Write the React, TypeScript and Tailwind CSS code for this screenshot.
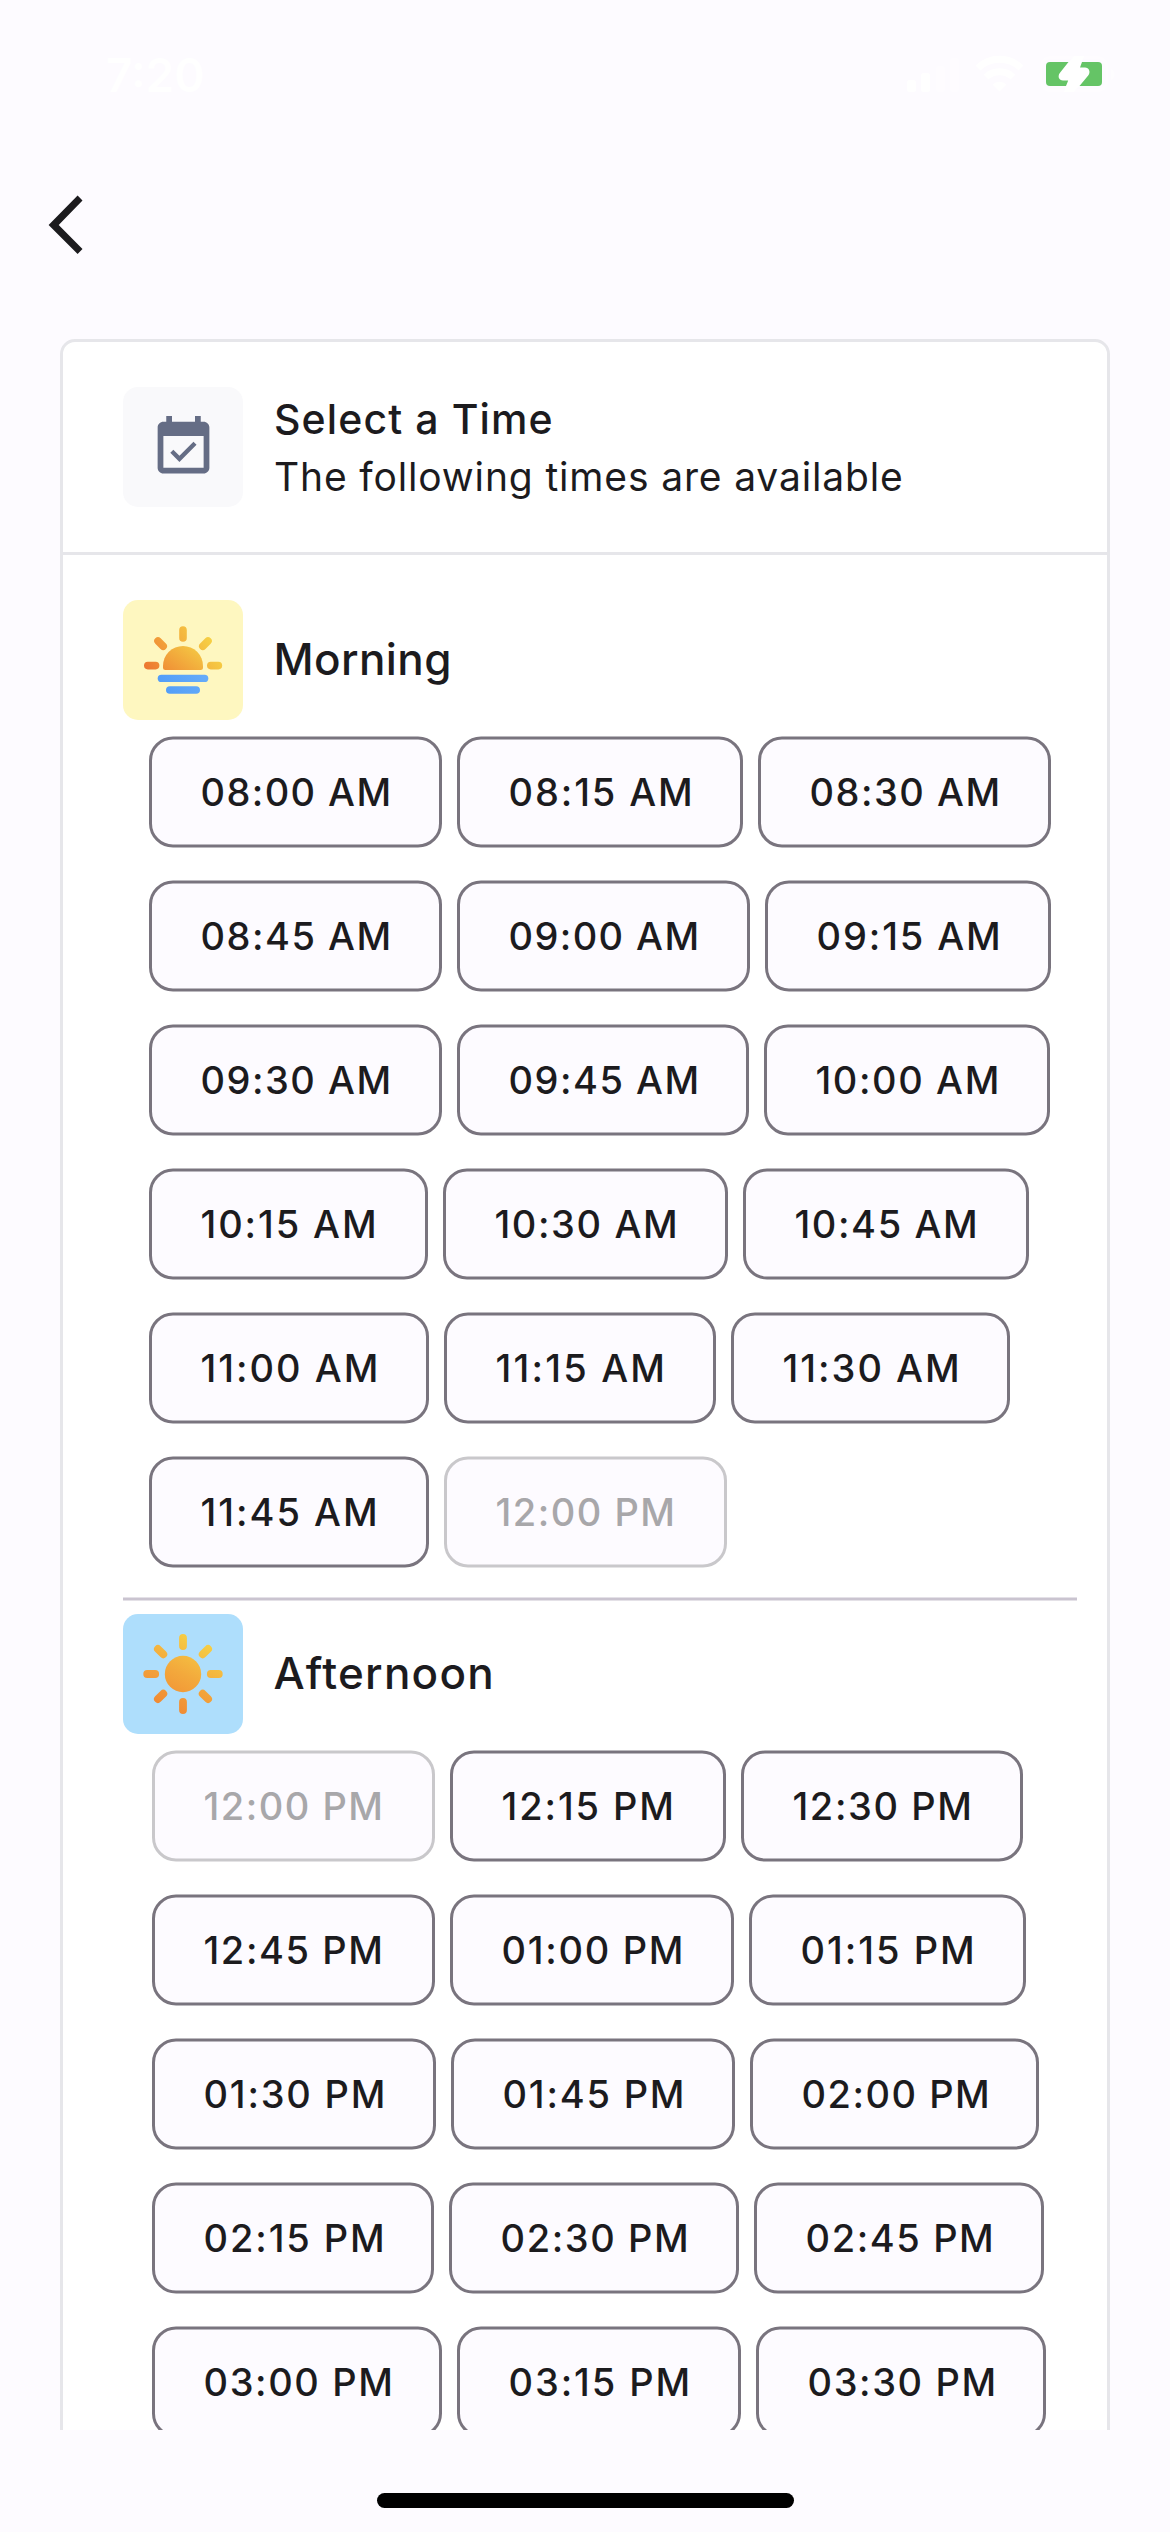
import type { ReactNode } from "react";

type Slot = { time: string; size: string; tracking: string; off?: boolean };

const MORNING: Slot[][] = [
  [
    { time: "08:00 AM", size: "w-[293px]", tracking: "tracking-[1.4px]" },
    { time: "08:15 AM", size: "w-[286px]", tracking: "tracking-[1.9px]" },
    { time: "08:30 AM", size: "w-[293px]", tracking: "tracking-[1.5px]" },
  ],
  [
    { time: "08:45 AM", size: "w-[293px]", tracking: "tracking-[1.5px]" },
    { time: "09:00 AM", size: "w-[293px]", tracking: "tracking-[1.4px]" },
    { time: "09:15 AM", size: "w-[286px]", tracking: "tracking-[1.9px]" },
  ],
  [
    { time: "09:30 AM", size: "w-[293px]", tracking: "tracking-[1.5px]" },
    { time: "09:45 AM", size: "w-[292px]", tracking: "tracking-[1.5px]" },
    { time: "10:00 AM", size: "w-[286px]", tracking: "tracking-[1.6px]" },
  ],
  [
    { time: "10:15 AM", size: "w-[279px]", tracking: "tracking-[1.9px]" },
    { time: "10:30 AM", size: "w-[285px]", tracking: "tracking-[1.6px]" },
    { time: "10:45 AM", size: "w-[286px]", tracking: "tracking-[1.6px]" },
  ],
  [
    { time: "11:00 AM", size: "w-[280px]", tracking: "tracking-[2px]" },
    { time: "11:15 AM", size: "w-[272px]", tracking: "tracking-[2.2px]" },
    { time: "11:30 AM", size: "w-[279px]", tracking: "tracking-[2px]" },
  ],
  [
    { time: "11:45 AM", size: "w-[280px]", tracking: "tracking-[2px]" },
    { time: "12:00 PM", size: "w-[283px]", tracking: "tracking-[1.5px]", off: true },
  ],
];

const AFTERNOON: Slot[][] = [
  [
    { time: "12:00 PM", size: "w-[283px]", tracking: "tracking-[1.5px]", off: true },
    { time: "12:15 PM", size: "w-[276px]", tracking: "tracking-[1.9px]" },
    { time: "12:30 PM", size: "w-[282px]", tracking: "tracking-[1.6px]" },
  ],
  [
    { time: "12:45 PM", size: "w-[283px]", tracking: "tracking-[1.6px]" },
    { time: "01:00 PM", size: "w-[284px]", tracking: "tracking-[1.7px]" },
    { time: "01:15 PM", size: "w-[277px]", tracking: "tracking-[2px]" },
  ],
  [
    { time: "01:30 PM", size: "w-[284px]", tracking: "tracking-[1.8px]" },
    { time: "01:45 PM", size: "w-[284px]", tracking: "tracking-[1.8px]" },
    { time: "02:00 PM", size: "w-[289px]", tracking: "tracking-[1.5px]" },
  ],
  [
    { time: "02:15 PM", size: "w-[282px]", tracking: "tracking-[1.9px]" },
    { time: "02:30 PM", size: "w-[290px]", tracking: "tracking-[1.6px]" },
    { time: "02:45 PM", size: "w-[290px]", tracking: "tracking-[1.6px]" },
  ],
  [
    { time: "03:00 PM", size: "w-[290px]", tracking: "tracking-[1.6px]" },
    { time: "03:15 PM", size: "w-[284px]", tracking: "tracking-[1.9px]" },
    { time: "03:30 PM", size: "w-[290px]", tracking: "tracking-[1.6px]" },
  ],
];

function SlotButton({ slot }: { slot: Slot }) {
  const tone = slot.off
    ? "border-[#c9c8cb] text-[#a8a7aa]"
    : "border-[#79747e] text-[#1c1b1e]";
  return (
    <button
      type="button"
      disabled={slot.off}
      className={`h-[111px] shrink-0 rounded-[24px] border-[3px] bg-[#fdfbff] pl-[48.5px] text-left text-[38px] leading-[105px] font-medium whitespace-nowrap ${slot.size} ${slot.tracking} ${tone}`}
    >
      {slot.time}
    </button>
  );
}

function SlotRows({ rows, inset }: { rows: Slot[][]; inset: string }) {
  return (
    <div className={`mt-4 flex translate-y-[0.5px] flex-col gap-[33px] ${inset}`}>
      {rows.map((row, i) => (
        <div key={i} className="flex gap-[15px]">
          {row.map((slot) => (
            <SlotButton key={slot.time} slot={slot} />
          ))}
        </div>
      ))}
    </div>
  );
}

function SunriseIcon() {
  return (
    <svg viewBox="0 0 120 120" className="size-[120px]" fill="none">
      <defs>
        <linearGradient id="rise" gradientUnits="userSpaceOnUse" x1="25" y1="76" x2="86" y2="36">
          <stop offset="0" stopColor="#ec7430" />
          <stop offset="0.45" stopColor="#f2a13a" />
          <stop offset="1" stopColor="#f6d044" />
        </linearGradient>
        <linearGradient id="riseDome" gradientUnits="userSpaceOnUse" x1="46" y1="74" x2="68" y2="44">
          <stop offset="0" stopColor="#f08f35" />
          <stop offset="1" stopColor="#f4c643" />
        </linearGradient>
        <linearGradient id="water" gradientUnits="userSpaceOnUse" x1="40" y1="94" x2="80" y2="74">
          <stop offset="0" stopColor="#519df8" />
          <stop offset="1" stopColor="#64abf9" />
        </linearGradient>
      </defs>
      <path d="M40 66a20 20 0 0 1 40 0v1.5a2.5 2.5 0 0 1-2.5 2.5h-35a2.5 2.5 0 0 1-2.5-2.5z" fill="url(#riseDome)" />
      <path
        d="M60 30v8.01M35 41l5.2 5.2M85 41l-5.2 5.2M24.8 65.6h7.8M87.8 65.6h7.6"
        stroke="url(#rise)"
        strokeWidth="7.6"
        strokeLinecap="round"
      />
      <rect x="34.7" y="74.7" width="50.6" height="7.4" rx="3.7" fill="url(#water)" />
      <rect x="43" y="86.2" width="34" height="7.6" rx="3.8" fill="url(#water)" />
    </svg>
  );
}

function SunIcon() {
  return (
    <svg viewBox="0 0 120 120" className="size-[120px]" fill="none">
      <defs>
        <linearGradient id="sun" gradientUnits="userSpaceOnUse" x1="42" y1="94" x2="78" y2="26">
          <stop offset="0" stopColor="#f08a33" />
          <stop offset="0.5" stopColor="#f3a93c" />
          <stop offset="1" stopColor="#f6cf45" />
        </linearGradient>
      </defs>
      <circle cx="60" cy="60" r="18.2" fill="url(#sun)" />
      <path
        d="M60 24v8M60 88v8M24.2 60h8M87.8 60h8M34.9 34.9l5.4 5.4M85.1 34.9l-5.4 5.4M34.9 85.1l5.4-5.4M85.1 85.1l-5.4-5.4"
        stroke="url(#sun)"
        strokeWidth="7.8"
        strokeLinecap="round"
      />
    </svg>
  );
}

function StatusIcons() {
  return (
    <svg viewBox="0 0 220 60" className="mr-[50px] h-[60px] w-[220px]" fill="white">
      <rect x="7" y="35" width="9" height="12" rx="2.5" />
      <rect x="21" y="28" width="9" height="19" rx="2.5" />
      <rect x="36" y="21" width="9" height="26" rx="2.5" fillOpacity="0.4" />
      <rect x="50" y="13" width="9" height="34" rx="2.5" fillOpacity="0.4" />
      <g fill="none" stroke="white" strokeWidth="7">
        <path d="M78 23a31 31 0 0 1 43 0" />
        <path d="M86 32a20 20 0 0 1 27 0" />
      </g>
      <path d="M92.5 39.5a10.5 10.5 0 0 1 14 0l-7 7z" />
      <rect x="141" y="12.5" width="66" height="33" rx="10" fill="none" stroke="white" strokeOpacity="0.4" strokeWidth="3" />
      <rect x="146" y="17" width="56" height="24" rx="4" fill="#65c466" />
      <path d="M168.500 17L159.800 28C157.300 31.500 159 35.500 163 35.500H168.200L166 41L164 47H174L179.500 41L188.200 30.500C191 27 189 22.500 185 22.500H180L182 17L184 11H174Z" />
      <path d="M211 24v11a6 6 0 0 0 0-11z" fillOpacity="0.5" />
    </svg>
  );
}

function SectionHeading({
  icon,
  tile,
  title,
  tracking,
}: {
  icon: ReactNode;
  tile: string;
  title: string;
  tracking: string;
}) {
  return (
    <div className="ml-[60px] flex h-[120px] items-start gap-[30.5px]">
      <div className={`size-[120px] rounded-[15px] ${tile}`}>{icon}</div>
      <h2 className={`text-[44px] leading-[118px] font-medium ${tracking}`}>{title}</h2>
    </div>
  );
}

export default function App() {
  return (
    <div className="flex h-[2532px] w-[1170px] flex-col overflow-hidden bg-[#fdfbff] font-['Inter','Noto_Sans',sans-serif] text-[#1c1b1e]">
      <header className="h-[339px] shrink-0">
        <div className="flex h-[150px] items-center justify-between">
          <span className="ml-[106px] text-[46px] font-semibold text-white">7:20</span>
          <StatusIcons />
        </div>
        <button type="button" aria-label="Back" className="ml-[49px] block pt-[45px]">
          <svg viewBox="0 0 34 60" className="h-[60px] w-[34px] overflow-visible" fill="#1c1b1e">
            <path d="M28.600 .5L33.500 5.400L9.700 30L33.500 54.100L28.600 59L-.4 30z" />
          </svg>
        </button>
      </header>

      <main className="h-[2091px] shrink-0 overflow-hidden pl-[60px]">
        <div className="h-[2200px] w-[1050px] rounded-t-[15px] border-[3px] border-[#e6e6ea] bg-white">
          <div className="flex h-[213px] items-start gap-[31px] border-b-[3px] border-[#e6e6ea] pt-[45px] pl-[60px]">
            <div className="flex size-[120px] items-center justify-center rounded-[15px] bg-[#f9f9fb]">
              <svg viewBox="0 0 24 24" className="size-[69px]" fill="#656d85">
                <path d="M16.530 11.060L15.470 10l-4.880 4.880-2.120-2.120-1.060 1.060L10.590 17l5.940-5.940zM19 3h-1V1h-2v2H8V1H6v2H5c-1.110 0-1.990.9-1.990 2L3 19c0 1.100.89 2 2 2h14c1.100 0 2-.9 2-2V5c0-1.100-.9-2-2-2zm0 16H5V8h14v11z" />
              </svg>
            </div>
            <div className="pt-[3px] leading-[58px]">
              <h1 className="text-[41px] font-medium tracking-[1.1px]">Select a Time</h1>
              <p className="text-[39px] tracking-[0.85px]">The following times are available</p>
            </div>
          </div>

          <section className="pt-[45px]">
            <SectionHeading icon={<SunriseIcon />} tile="bg-[#fef7c0]" title="Morning" tracking="tracking-[0.4px]" />
            <SlotRows rows={MORNING} inset="ml-[86px]" />
          </section>

          <div className="mt-[30px] ml-[60px] h-[3px] w-[954px] translate-y-[0.5px] bg-[#cac4d0]" />

          <section className="pt-[14px]">
            <SectionHeading icon={<SunIcon />} tile="bg-[#aedefc]" title="Afternoon" tracking="tracking-[1.25px]" />
            <SlotRows rows={AFTERNOON} inset="ml-[89px]" />
          </section>
        </div>
      </main>

      <footer className="flex h-[102px] shrink-0 justify-center pt-[63px]">
        <div className="h-[15px] w-[417px] rounded-full bg-black" />
      </footer>
    </div>
  );
}
